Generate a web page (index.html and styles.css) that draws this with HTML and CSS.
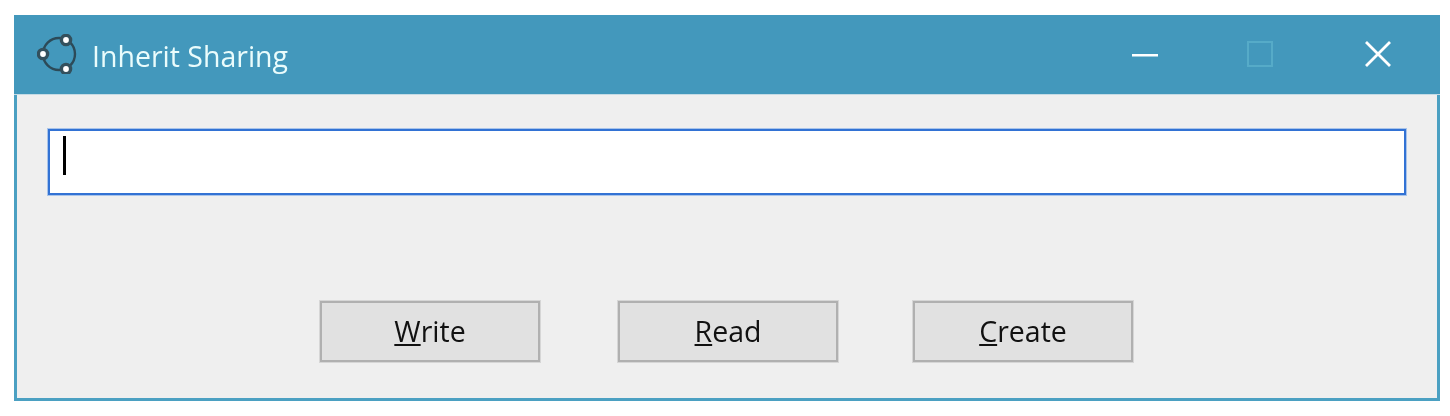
FILE: index.html
```html
<!DOCTYPE html>
<html lang="en">
  <head>
    <meta charset="UTF-8" />
    <meta name="viewport" content="width=device-width, initial-scale=1.0" />
    <title>Inherit Sharing</title>
    <link rel="stylesheet" href="styles.css">
  </head>
  <body>
    <div class="window">
      <div class="titlebar">
        <svg class="app-icon" width="40" height="40" viewBox="0 0 40 40">
          <circle cx="22" cy="20" r="16" fill="none" stroke="#2c4a58" stroke-width="2.400"/>
          <circle cx="29" cy="6" r="4.600" fill="#fff" stroke="#33505d" stroke-width="3.400"/>
          <circle cx="6" cy="20" r="4.600" fill="#fff" stroke="#33505d" stroke-width="3.400"/>
          <circle cx="29" cy="35" r="4.600" fill="#fff" stroke="#33505d" stroke-width="3.400"/>
        </svg>
        <div class="title">Inherit Sharing</div>
        <div class="controls">
          <svg class="ctl" width="26" height="26" viewBox="0 0 26 26">
            <rect x="0" y="13" width="26" height="2.500" fill="#fff"/>
          </svg>
          <svg class="ctl ctl-max" width="26" height="26" viewBox="0 0 26 26">
            <rect x="1" y="1" width="24" height="24" fill="none" stroke="#56abc8" stroke-width="2"/>
          </svg>
          <svg class="ctl ctl-close" width="26" height="26" viewBox="0 0 26 26">
            <path d="M1 1 L25 25 M25 1 L1 25" stroke="#fff" stroke-width="2.800"/>
          </svg>
        </div>
      </div>
      <div class="content">
        <div class="textbox"><span class="caret"></span></div>
        <div class="buttons">
          <button class="btn"><u>W</u>rite</button>
          <button class="btn btn-read"><u>R</u>ead</button>
          <button class="btn btn-create"><u>C</u>reate</button>
        </div>
      </div>
    </div>
  </body>
</html>
```

FILE: styles.css
```css
html, body
{
    margin: 0;
    background: #fff;
}
body
{
    padding: 15px 10px 15px 14px;
    font-family: "Open Sans", "Liberation Sans", sans-serif;
}
/* the reference is a slightly soft upscaled capture */
.window
{
    width: 1426px;
    height: 386px;
    box-sizing: border-box;
    border: 3px solid #4ba0c2;
    border-top: none;
    display: flex;
    flex-direction: column;
    background: #efefef;
    filter: blur(0.4px);
}
.titlebar
{
    height: 80px;
    margin: 0 -3px;
    background: #4398bc;
    border-bottom: 1px solid #c5dbe5;
    box-sizing: border-box;
    display: flex;
    align-items: center;
    padding-left: 23px;
    color: #eafcfc;
}
.app-icon
{
    margin-right: 15px;
    margin-top: -1px;
}
.title
{
    font-size: 28.500px;
    margin-top: 3px;
}
.controls
{
    margin-left: auto;
    display: flex;
    padding-right: 49px;
    margin-top: -1px;
}
.ctl-max
{
    margin-left: 89px;
}
.ctl-close
{
    margin-left: 92px;
}
.content
{
    flex: 1;
    padding: 34px 31px 0 31px;
}
.textbox
{
    height: 66px;
    box-sizing: border-box;
    border: 2px solid #3272d4;
    box-shadow: 0 0 0 1px #a9c4ea;
    background: #fff;
    padding: 5px 13px;
}
.caret
{
    display: block;
    width: 3px;
    height: 39px;
    background: #000;
}
.buttons
{
    display: flex;
    margin-top: 106px;
    padding-left: 272px;
}
.btn
{
    width: 220px;
    height: 61px;
    box-sizing: border-box;
    border: 2px solid #b0b0b0;
    box-shadow: 0 0 0 1px #d6d6d6;
    background: #e1e1e1;
    color: #111;
    font-family: inherit;
    font-size: 28.500px;
    padding: 0 0 2px;
}
.btn-read
{
    margin-left: 78px;
}
.btn-create
{
    margin-left: 75px;
}
```
